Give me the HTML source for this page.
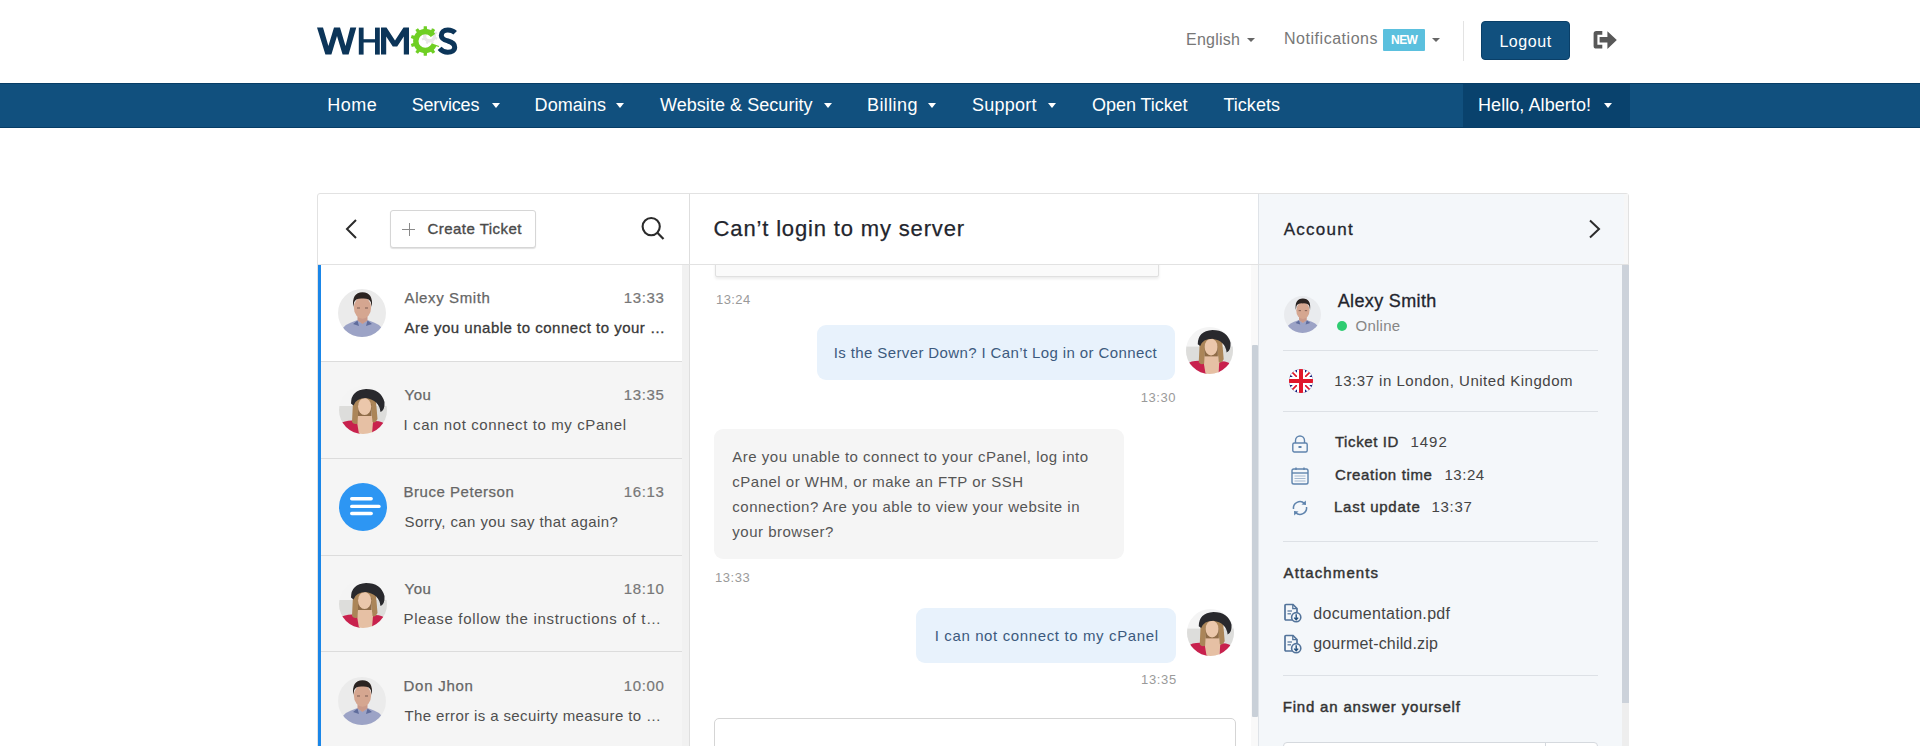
<!DOCTYPE html>
<html><head><meta charset="utf-8"><title>WHMCS Tickets</title>
<style>
html,body{margin:0;padding:0;background:#fff;width:1920px;height:746px;overflow:hidden;position:relative}
body{font-family:"Liberation Sans",sans-serif;white-space:nowrap}
</style></head><body>
<svg style="position:absolute;left:310px;top:18px" width="160" height="46" viewBox="310 18 160 46">
<defs><clipPath id="gw"><polygon points="425.3,41.0 453.5,51.3 451.3,56.0 448.3,60.3 444.6,64.0 440.3,67.0 435.6,69.2 430.5,70.5 425.3,71.0 420.1,70.5 415.0,69.2 410.3,67.0 406.0,64.0 402.3,60.3 399.3,56.0 397.1,51.3 395.8,46.2 395.3,41.0 395.8,35.8 397.1,30.7 399.3,26.0 402.3,21.7 406.0,18.0 410.3,15.0 415.0,12.8 420.1,11.5 425.3,11.0 430.5,11.5 435.6,12.8 440.3,15.0 444.6,18.0 448.3,21.7 449.6,23.4"/></clipPath></defs>
<g fill="#0c3559">
<polygon points="317,27.6 323,27.6 328.4,46 334,27.6 340,27.6 345.5,46 350.3,27.6 356.3,27.6 348.6,54.6 342.6,54.6 337,36 331.4,54.6 325.4,54.6"/>
<rect x="358.8" y="27.6" width="4.8" height="27"/><rect x="375" y="27.6" width="4.8" height="27"/><rect x="363" y="39.2" width="12.5" height="3.3"/>
<polygon points="381,54.6 381,27.6 386.5,27.6 395,40.5 403.5,27.6 409,27.6 409,54.6 403.8,54.6 403.8,36.5 397.2,46.5 392.8,46.5 386.2,36.5 386.2,54.6"/>
</g>
<path d="M429.22,29.51 L430.61,29.60 L431.28,27.89 L433.34,28.64 L432.76,30.38 L433.89,31.21 L434.82,32.26 L436.49,31.53 L437.42,33.52 L435.78,34.33 L435.99,35.72 L435.90,37.11 L437.61,37.78 L436.86,39.84 L435.12,39.26 L434.29,40.39 L433.24,41.32 L433.97,42.99 L431.98,43.92 L431.17,42.28 L429.78,42.49 L428.39,42.40 L427.72,44.11 L425.66,43.36 L426.24,41.62 L425.11,40.79 L424.18,39.74 L422.51,40.47 L421.58,38.48 L423.22,37.67 L423.01,36.28 L423.10,34.89 L421.39,34.22 L422.14,32.16 L423.88,32.74 L424.71,31.61 L425.76,30.68 L425.03,29.01 L427.02,28.08 L427.83,29.72 Z M432.70,36.00 A3.2,3.2 0 1 0 426.30,36.00 A3.2,3.2 0 1 0 432.70,36.00 Z" fill="#e8e8e8" fill-rule="evenodd"/>
<path d="M421.53,29.40 L423.58,28.92 L423.73,26.28 L426.87,26.28 L427.02,28.92 L429.07,29.40 L431.01,30.22 L432.68,28.17 L435.22,30.01 L433.79,32.24 L435.17,33.83 L436.26,35.63 L438.81,34.96 L439.78,37.94 L437.32,38.90 L437.50,41.00 L437.32,43.10 L439.78,44.06 L438.81,47.04 L436.26,46.37 L435.17,48.17 L433.79,49.76 L435.22,51.99 L432.68,53.83 L431.01,51.78 L429.07,52.60 L427.02,53.08 L426.87,55.72 L423.73,55.72 L423.58,53.08 L421.53,52.60 L419.59,51.78 L417.92,53.83 L415.38,51.99 L416.81,49.76 L415.43,48.17 L414.34,46.37 L411.79,47.04 L410.82,44.06 L413.28,43.10 L413.10,41.00 L413.28,38.90 L410.82,37.94 L411.79,34.96 L414.34,35.63 L415.43,33.83 L416.81,32.24 L415.38,30.01 L417.92,28.17 L419.59,30.22 Z M432.10,41.00 A6.8,6.8 0 1 0 418.50,41.00 A6.8,6.8 0 1 0 432.10,41.00 Z" fill="#6fcf24" fill-rule="evenodd" clip-path="url(#gw)"/>
<path d="M455.2,32.8 C452.8,30.4 450.3,29.9 447.8,29.9 C443.6,29.9 441.3,32.3 441.3,35.4 C441.3,39.1 444.9,40.1 448,41.0 C451.9,42.1 454.7,43.6 454.7,47.2 C454.7,50.4 451.8,52.2 447.8,52.2 C444.6,52.2 441.8,51.0 439.6,48.3" fill="none" stroke="#0c3559" stroke-width="5"/>
</svg>
<div style="position:absolute;left:1247px;top:38px;width:0;height:0;border-left:4.5px solid transparent;border-right:4.5px solid transparent;border-top:4.5px solid #666"></div>
<div style="position:absolute;left:1383px;top:29px;width:42px;height:22px;background:#5bc0de;border-radius:1px"></div>
<div style="position:absolute;left:1432px;top:38px;width:0;height:0;border-left:4.5px solid transparent;border-right:4.5px solid transparent;border-top:4.5px solid #666"></div>
<div style="position:absolute;left:1463px;top:21px;width:1px;height:40px;background:#e3e3e3"></div>
<div style="position:absolute;left:1481px;top:21px;width:87px;height:37px;background:#11507e;border:1px solid #0a3f68;border-radius:4px"></div>
<svg style="position:absolute;left:1588px;top:24px" width="34" height="32" viewBox="1588 24 34 32">
<path d="M1602.3,32.8 H1596.3 Q1595.5,32.8 1595.5,33.6 V45.9 Q1595.5,46.6 1596.3,46.6 H1602.3" fill="none" stroke="#585858" stroke-width="3.8"/>
<path d="M1599.6,36.9 H1607.4 V31.3 L1616.8,40 L1607.4,48.9 V42.6 H1599.6 Z" fill="#585858"/>
</svg>
<div style="position:absolute;left:0;top:83px;width:1920px;height:45px;background:#11507e;border-top:1px solid #073d66;border-bottom:1px solid #073d66;box-sizing:border-box"></div>
<div style="position:absolute;left:1463px;top:84px;width:167px;height:43px;background:#09426d"></div>
<div style="position:absolute;left:491.9px;top:103px;width:0;height:0;border-left:4.5px solid transparent;border-right:4.5px solid transparent;border-top:5px solid #fff"></div>
<div style="position:absolute;left:616.4px;top:103px;width:0;height:0;border-left:4.5px solid transparent;border-right:4.5px solid transparent;border-top:5px solid #fff"></div>
<div style="position:absolute;left:824px;top:103px;width:0;height:0;border-left:4.5px solid transparent;border-right:4.5px solid transparent;border-top:5px solid #fff"></div>
<div style="position:absolute;left:928px;top:103px;width:0;height:0;border-left:4.5px solid transparent;border-right:4.5px solid transparent;border-top:5px solid #fff"></div>
<div style="position:absolute;left:1048.4px;top:103px;width:0;height:0;border-left:4.5px solid transparent;border-right:4.5px solid transparent;border-top:5px solid #fff"></div>
<div style="position:absolute;left:1604px;top:103px;width:0;height:0;border-left:4.5px solid transparent;border-right:4.5px solid transparent;border-top:5px solid #fff"></div>
<div style="position:absolute;left:317px;top:193px;width:1312px;height:600px;border:1px solid #e2e2e2;border-radius:3px;box-sizing:border-box;background:#fff"></div>
<div style="position:absolute;left:1259px;top:194px;width:369px;height:560px;background:#f4f7fa;border-top-right-radius:2px"></div>
<div style="position:absolute;left:689px;top:194px;width:1px;height:560px;background:#dedede"></div>
<div style="position:absolute;left:1258px;top:194px;width:1px;height:560px;background:#dfe3e8"></div>
<div style="position:absolute;left:318px;top:264px;width:1310px;height:1px;background:#e2e2e2"></div>
<svg style="position:absolute;left:340px;top:214px" width="24" height="30" viewBox="0 0 24 30"><polyline points="16,6 7,15 16,24" fill="none" stroke="#2b2b2b" stroke-width="2"/></svg>
<div style="position:absolute;left:390px;top:210px;width:146px;height:38px;border:1px solid #d6d6d6;border-radius:3px;box-sizing:border-box;box-shadow:0 1px 1px rgba(0,0,0,0.12);background:#fff"></div>
<div style="position:absolute;left:402px;top:228.5px;width:13px;height:1px;background:#8a8a8a"></div><div style="position:absolute;left:408.5px;top:222.5px;width:1px;height:13px;background:#8a8a8a"></div>
<svg style="position:absolute;left:636px;top:212px" width="32" height="32" viewBox="636 212 32 32"><circle cx="651.2" cy="226.6" r="8.6" fill="none" stroke="#2b2b2b" stroke-width="2.1"/><line x1="657.4" y1="232.8" x2="663.5" y2="239" stroke="#2b2b2b" stroke-width="2.2"/></svg>
<div style="position:absolute;left:318px;top:265px;width:371px;height:490px;background:#f5f5f5"></div>
<div style="position:absolute;left:682px;top:265px;width:7px;height:490px;background:#f1f1f1"></div>
<div style="position:absolute;left:318px;top:265px;width:364px;height:97px;background:#fff"></div>
<div style="position:absolute;left:318px;top:265px;width:3px;height:490px;background:#1a86e8"></div>
<div style="position:absolute;left:321px;top:361px;width:361px;height:1px;background:#dcdcdc"></div>
<div style="position:absolute;left:321px;top:458px;width:361px;height:1px;background:#dcdcdc"></div>
<div style="position:absolute;left:321px;top:555px;width:361px;height:1px;background:#dcdcdc"></div>
<div style="position:absolute;left:321px;top:651px;width:361px;height:1px;background:#dcdcdc"></div>
<svg style="position:absolute;left:338.0px;top:289.0px;filter:blur(0.45px)" width="48" height="48" viewBox="0 0 48 48">
<defs><clipPath id="c362_313"><circle cx="24" cy="24" r="24"/></clipPath></defs>
<g clip-path="url(#c362_313)"><rect width="48" height="48" fill="#ebebeb"/>
<path d="M1,48 Q3,37 13,33.5 L19.5,31 L24.5,34.5 L29.5,31 L36,33.5 Q46,37 47,48 Z" fill="#9ca3c6"/>
<path d="M15,35 L19.5,31.5 L21,37 Z M34,35 L29.5,31.5 L28,37 Z" fill="#5f6c9c"/>
<path d="M19.5,25 h10 v6.5 l-5,3.5 l-5,-3.5 z" fill="#c9998a"/>
<ellipse cx="24.5" cy="18.8" rx="8.6" ry="11" fill="#d5a690"/>
<path d="M15.2,18 Q13.5,3.5 24.5,3.2 Q35.5,3.5 33.8,18 L32.8,13 Q31,9.2 24.5,9.6 Q18,9.2 16.2,13 Z" fill="#2b2321"/>
<path d="M19,19 h3 M27,19 h3" stroke="#7a5a50" stroke-width="1.2"/>
</g></svg>
<svg style="position:absolute;left:338.5px;top:386.0px;filter:blur(0.5px)" width="48" height="48" viewBox="0 0 48 48">
<defs><clipPath id="w362_5_410"><circle cx="24" cy="24" r="24"/></clipPath></defs>
<g clip-path="url(#w362_5_410)"><rect width="48" height="48" fill="#f4f4f4"/>
<rect y="20" width="48" height="18" fill="#dddddb"/>
<path d="M0,48 V38 Q6,34 15,34.5 L21,37 L21,48 Z M48,48 V40 Q44,35 36,35 L33,37 V48 Z" fill="#c8214d"/>
<path d="M19,27 L32,27 L34,36 L33,48 L20,48 L18,36 Z" fill="#e6c0a4"/>
<path d="M14,15 Q16,8 25.5,8 Q35,8 37,15 L38.5,33 Q36.5,37.5 33.5,36 L32,22 L19.5,22 L18.5,37.5 Q15,39 13,36 Z" fill="#ab8558"/>
<rect x="19" y="18" width="13.5" height="12" fill="#8f6c48"/><ellipse cx="25.6" cy="20.5" rx="6.6" ry="8.6" fill="#ebc7ab"/>
<path d="M12,17.5 Q12,4 27,3 Q42,3 45.5,16 Q46,24 41.5,26 Q40,14 27,12 Q17,12 14.5,19.5 Z" fill="#29292d"/>
</g></svg>
<svg style="position:absolute;left:338.5px;top:483.0px" width="48" height="48" viewBox="0 0 48 48">
<circle cx="24" cy="24" r="24" fill="#2d96f3"/>
<g stroke="#fff" stroke-width="3.4" stroke-linecap="round"><line x1="12.7" y1="15.8" x2="32.2" y2="15.8"/><line x1="12.7" y1="23.4" x2="40" y2="23.4"/><line x1="12.7" y1="30.5" x2="32.2" y2="30.5"/></g></svg>
<svg style="position:absolute;left:338.5px;top:580.0px;filter:blur(0.5px)" width="48" height="48" viewBox="0 0 48 48">
<defs><clipPath id="w362_5_604"><circle cx="24" cy="24" r="24"/></clipPath></defs>
<g clip-path="url(#w362_5_604)"><rect width="48" height="48" fill="#f4f4f4"/>
<rect y="20" width="48" height="18" fill="#dddddb"/>
<path d="M0,48 V38 Q6,34 15,34.5 L21,37 L21,48 Z M48,48 V40 Q44,35 36,35 L33,37 V48 Z" fill="#c8214d"/>
<path d="M19,27 L32,27 L34,36 L33,48 L20,48 L18,36 Z" fill="#e6c0a4"/>
<path d="M14,15 Q16,8 25.5,8 Q35,8 37,15 L38.5,33 Q36.5,37.5 33.5,36 L32,22 L19.5,22 L18.5,37.5 Q15,39 13,36 Z" fill="#ab8558"/>
<rect x="19" y="18" width="13.5" height="12" fill="#8f6c48"/><ellipse cx="25.6" cy="20.5" rx="6.6" ry="8.6" fill="#ebc7ab"/>
<path d="M12,17.5 Q12,4 27,3 Q42,3 45.5,16 Q46,24 41.5,26 Q40,14 27,12 Q17,12 14.5,19.5 Z" fill="#29292d"/>
</g></svg>
<svg style="position:absolute;left:338.0px;top:677.0px;filter:blur(0.45px)" width="48" height="48" viewBox="0 0 48 48">
<defs><clipPath id="c362_701"><circle cx="24" cy="24" r="24"/></clipPath></defs>
<g clip-path="url(#c362_701)"><rect width="48" height="48" fill="#ebebeb"/>
<path d="M1,48 Q3,37 13,33.5 L19.5,31 L24.5,34.5 L29.5,31 L36,33.5 Q46,37 47,48 Z" fill="#9ca3c6"/>
<path d="M15,35 L19.5,31.5 L21,37 Z M34,35 L29.5,31.5 L28,37 Z" fill="#5f6c9c"/>
<path d="M19.5,25 h10 v6.5 l-5,3.5 l-5,-3.5 z" fill="#c9998a"/>
<ellipse cx="24.5" cy="18.8" rx="8.6" ry="11" fill="#d5a690"/>
<path d="M15.2,18 Q13.5,3.5 24.5,3.2 Q35.5,3.5 33.8,18 L32.8,13 Q31,9.2 24.5,9.6 Q18,9.2 16.2,13 Z" fill="#2b2321"/>
<path d="M19,19 h3 M27,19 h3" stroke="#7a5a50" stroke-width="1.2"/>
</g></svg>
<div style="position:absolute;left:715px;top:230px;width:444px;height:47px;border:1px solid #e0e0e0;border-radius:2px;box-sizing:border-box;background:#fafafa;box-shadow:0 2px 3px rgba(0,0,0,0.08);clip-path:inset(35px -5px -6px -5px)"></div>
<div style="position:absolute;left:817px;top:325px;width:358px;height:55px;background:#e8f2fc;border-radius:9px"></div>
<svg style="position:absolute;left:1186.0px;top:326.5px;filter:blur(0.5px)" width="47" height="47" viewBox="0 0 48 48">
<defs><clipPath id="w1209_5_350"><circle cx="24" cy="24" r="24"/></clipPath></defs>
<g clip-path="url(#w1209_5_350)"><rect width="48" height="48" fill="#f4f4f4"/>
<rect y="20" width="48" height="18" fill="#dddddb"/>
<path d="M0,48 V38 Q6,34 15,34.5 L21,37 L21,48 Z M48,48 V40 Q44,35 36,35 L33,37 V48 Z" fill="#c8214d"/>
<path d="M19,27 L32,27 L34,36 L33,48 L20,48 L18,36 Z" fill="#e6c0a4"/>
<path d="M14,15 Q16,8 25.5,8 Q35,8 37,15 L38.5,33 Q36.5,37.5 33.5,36 L32,22 L19.5,22 L18.5,37.5 Q15,39 13,36 Z" fill="#ab8558"/>
<rect x="19" y="18" width="13.5" height="12" fill="#8f6c48"/><ellipse cx="25.6" cy="20.5" rx="6.6" ry="8.6" fill="#ebc7ab"/>
<path d="M12,17.5 Q12,4 27,3 Q42,3 45.5,16 Q46,24 41.5,26 Q40,14 27,12 Q17,12 14.5,19.5 Z" fill="#29292d"/>
</g></svg>
<div style="position:absolute;left:714px;top:429px;width:410px;height:130px;background:#f5f5f5;border-radius:9px"></div>
<div style="position:absolute;left:916px;top:608px;width:260px;height:55px;background:#e8f2fc;border-radius:9px"></div>
<svg style="position:absolute;left:1186.5px;top:608.5px;filter:blur(0.5px)" width="47" height="47" viewBox="0 0 48 48">
<defs><clipPath id="w1210_632"><circle cx="24" cy="24" r="24"/></clipPath></defs>
<g clip-path="url(#w1210_632)"><rect width="48" height="48" fill="#f4f4f4"/>
<rect y="20" width="48" height="18" fill="#dddddb"/>
<path d="M0,48 V38 Q6,34 15,34.5 L21,37 L21,48 Z M48,48 V40 Q44,35 36,35 L33,37 V48 Z" fill="#c8214d"/>
<path d="M19,27 L32,27 L34,36 L33,48 L20,48 L18,36 Z" fill="#e6c0a4"/>
<path d="M14,15 Q16,8 25.5,8 Q35,8 37,15 L38.5,33 Q36.5,37.5 33.5,36 L32,22 L19.5,22 L18.5,37.5 Q15,39 13,36 Z" fill="#ab8558"/>
<rect x="19" y="18" width="13.5" height="12" fill="#8f6c48"/><ellipse cx="25.6" cy="20.5" rx="6.6" ry="8.6" fill="#ebc7ab"/>
<path d="M12,17.5 Q12,4 27,3 Q42,3 45.5,16 Q46,24 41.5,26 Q40,14 27,12 Q17,12 14.5,19.5 Z" fill="#29292d"/>
</g></svg>
<div style="position:absolute;left:714px;top:718px;width:522px;height:60px;border:1px solid #d5d5d5;border-radius:5px;box-sizing:border-box;background:#fff"></div>
<div style="position:absolute;left:1251px;top:265px;width:7px;height:490px;background:#f9f9f9"></div>
<div style="position:absolute;left:1252px;top:345px;width:6px;height:372px;background:#c9d0d8;border-radius:1px"></div>
<svg style="position:absolute;left:1580px;top:214px" width="24" height="30" viewBox="0 0 24 30"><polyline points="10,6.5 19,15 10,23.5" fill="none" stroke="#2b2b2b" stroke-width="2"/></svg>
<div style="position:absolute;left:1624px;top:194px;width:4px;height:70px;background:#f7f7f7"></div>
<div style="position:absolute;left:1622px;top:265px;width:7px;height:490px;background:#eeeeee"></div>
<div style="position:absolute;left:1622px;top:265px;width:7px;height:438px;background:#ccd2da"></div>
<svg style="position:absolute;left:1284.0px;top:295.5px;filter:blur(0.45px)" width="37" height="37" viewBox="0 0 48 48">
<defs><clipPath id="c1302_5_314"><circle cx="24" cy="24" r="24"/></clipPath></defs>
<g clip-path="url(#c1302_5_314)"><rect width="48" height="48" fill="#e9ebee"/>
<path d="M1,48 Q3,37 13,33.5 L19.5,31 L24.5,34.5 L29.5,31 L36,33.5 Q46,37 47,48 Z" fill="#9ca3c6"/>
<path d="M15,35 L19.5,31.5 L21,37 Z M34,35 L29.5,31.5 L28,37 Z" fill="#5f6c9c"/>
<path d="M19.5,25 h10 v6.5 l-5,3.5 l-5,-3.5 z" fill="#c9998a"/>
<ellipse cx="24.5" cy="18.8" rx="8.6" ry="11" fill="#d5a690"/>
<path d="M15.2,18 Q13.5,3.5 24.5,3.2 Q35.5,3.5 33.8,18 L32.8,13 Q31,9.2 24.5,9.6 Q18,9.2 16.2,13 Z" fill="#2b2321"/>
<path d="M19,19 h3 M27,19 h3" stroke="#7a5a50" stroke-width="1.2"/>
</g></svg>
<div style="position:absolute;left:1337px;top:321px;width:10px;height:10px;border-radius:50%;background:#2ecc71"></div>
<div style="position:absolute;left:1283px;top:350px;width:315px;height:1px;background:#dde1e6"></div>
<div style="position:absolute;left:1283px;top:411px;width:315px;height:1px;background:#dde1e6"></div>
<div style="position:absolute;left:1283px;top:541px;width:315px;height:1px;background:#dde1e6"></div>
<div style="position:absolute;left:1283px;top:675px;width:315px;height:1px;background:#dde1e6"></div>
<svg style="position:absolute;left:1288.5px;top:368.5px" width="24" height="24" viewBox="0 0 60 60">
<defs><clipPath id="uk"><circle cx="30" cy="30" r="30"/></clipPath></defs>
<g clip-path="url(#uk)"><rect width="60" height="60" fill="#1a237e"/>
<path d="M0,0 L60,60 M60,0 L0,60" stroke="#fff" stroke-width="15"/>
<path d="M0,0 L60,60 M60,0 L0,60" stroke="#e0182b" stroke-width="4"/>
<path d="M30,0 V60 M0,30 H60" stroke="#fff" stroke-width="20"/>
<path d="M30,0 V60 M0,30 H60" stroke="#e0182b" stroke-width="10"/></g></svg>
<svg style="position:absolute;left:1290px;top:434px" width="20" height="20" viewBox="0 0 20 20"><path d="M5.5,9 V6.5 a4.5,4.5 0 0 1 9,0 V9" fill="none" stroke="#5f84ad" stroke-width="1.4"/><rect x="2.8" y="9" width="14.4" height="9" rx="1.5" fill="none" stroke="#5f84ad" stroke-width="1.4"/><rect x="8.5" y="12" width="3" height="2" fill="#5f84ad"/></svg>
<svg style="position:absolute;left:1290px;top:466px" width="20" height="20" viewBox="0 0 20 20"><rect x="2" y="3" width="16" height="15" rx="1.8" fill="none" stroke="#5f84ad" stroke-width="1.4"/><line x1="2" y1="7" x2="18" y2="7" stroke="#5f84ad" stroke-width="1.4"/><g stroke="#a5b9d0" stroke-width="1"><line x1="4.5" y1="10" x2="15.5" y2="10"/><line x1="4.5" y1="12.5" x2="15.5" y2="12.5"/><line x1="4.5" y1="15" x2="15.5" y2="15"/></g><line x1="6" y1="1.5" x2="6" y2="4" stroke="#5f84ad" stroke-width="1.4"/><line x1="14" y1="1.5" x2="14" y2="4" stroke="#5f84ad" stroke-width="1.4"/></svg>
<svg style="position:absolute;left:1290px;top:498px" width="20" height="20" viewBox="0 0 20 20"><path d="M3.5,11 a6.5,6.5 0 0 1 11,-5.5" fill="none" stroke="#5f84ad" stroke-width="1.5"/><path d="M16.5,9 a6.5,6.5 0 0 1 -11,5.5" fill="none" stroke="#5f84ad" stroke-width="1.5"/><path d="M15.8,2.5 L16,7 L11.5,6.6 Z" fill="#5f84ad"/><path d="M4.2,17.5 L4,13 L8.5,13.4 Z" fill="#5f84ad"/></svg>
<svg style="position:absolute;left:1283px;top:603px" width="20" height="20" viewBox="0 0 20 20"><path d="M9.5,17 H3 Q2,17 2,16 V2.5 Q2,1.5 3,1.5 H10 L14,5.5 V9" fill="none" stroke="#52739a" stroke-width="1.7"/><path d="M9.8,1.5 V5.6 H14" fill="none" stroke="#52739a" stroke-width="1.3"/><line x1="4.5" y1="8" x2="9" y2="8" stroke="#52739a" stroke-width="1.2"/><line x1="4.5" y1="10.8" x2="8" y2="10.8" stroke="#52739a" stroke-width="1.2"/><circle cx="13.2" cy="14.2" r="4.6" fill="#f4f7fa" stroke="#52739a" stroke-width="1.6"/><path d="M13.2,11.3 V16.6 M11.2,14.6 L13.2,16.8 L15.2,14.6" fill="none" stroke="#24507e" stroke-width="1.4"/></svg>
<svg style="position:absolute;left:1283px;top:634px" width="20" height="20" viewBox="0 0 20 20"><path d="M9.5,17 H3 Q2,17 2,16 V2.5 Q2,1.5 3,1.5 H10 L14,5.5 V9" fill="none" stroke="#52739a" stroke-width="1.7"/><path d="M9.8,1.5 V5.6 H14" fill="none" stroke="#52739a" stroke-width="1.3"/><line x1="4.5" y1="8" x2="9" y2="8" stroke="#52739a" stroke-width="1.2"/><line x1="4.5" y1="10.8" x2="8" y2="10.8" stroke="#52739a" stroke-width="1.2"/><circle cx="13.2" cy="14.2" r="4.6" fill="#f4f7fa" stroke="#52739a" stroke-width="1.6"/><path d="M13.2,11.3 V16.6 M11.2,14.6 L13.2,16.8 L15.2,14.6" fill="none" stroke="#24507e" stroke-width="1.4"/></svg>
<div style="position:absolute;left:1283px;top:742px;width:315px;height:40px;border:1px solid #d5d9de;border-radius:4px;box-sizing:border-box;background:#fff"></div>
<div style="position:absolute;left:1545px;top:743px;width:1px;height:40px;background:#d5d9de"></div>
<div style="position:absolute;left:1186.00px;top:31.50px;font-size:16px;line-height:16px;color:#777;letter-spacing:0.237px;">English</div>
<div style="position:absolute;left:1284.00px;top:31.00px;font-size:16px;line-height:16px;color:#777;letter-spacing:0.529px;">Notifications</div>
<div style="position:absolute;left:1391.00px;top:33.90px;font-size:12px;line-height:12px;color:#fff;letter-spacing:-0.535px;font-weight:700;">NEW</div>
<div style="position:absolute;left:1499.40px;top:33.70px;font-size:16px;line-height:16px;color:#fff;letter-spacing:0.562px;">Logout</div>
<div style="position:absolute;left:327.30px;top:95.80px;font-size:18px;line-height:18px;color:#fff;letter-spacing:0.499px;">Home</div>
<div style="position:absolute;left:411.70px;top:95.80px;font-size:18px;line-height:18px;color:#fff;letter-spacing:-0.189px;">Services</div>
<div style="position:absolute;left:534.60px;top:95.80px;font-size:18px;line-height:18px;color:#fff;letter-spacing:0.063px;">Domains</div>
<div style="position:absolute;left:660.00px;top:95.80px;font-size:18px;line-height:18px;color:#fff;letter-spacing:0.046px;">Website &amp; Security</div>
<div style="position:absolute;left:867.00px;top:95.80px;font-size:18px;line-height:18px;color:#fff;letter-spacing:0.398px;">Billing</div>
<div style="position:absolute;left:971.90px;top:95.80px;font-size:18px;line-height:18px;color:#fff;letter-spacing:0.276px;">Support</div>
<div style="position:absolute;left:1092.00px;top:95.80px;font-size:18px;line-height:18px;color:#fff;letter-spacing:-0.047px;">Open Ticket</div>
<div style="position:absolute;left:1223.40px;top:95.80px;font-size:18px;line-height:18px;color:#fff;letter-spacing:0.044px;">Tickets</div>
<div style="position:absolute;left:1478.00px;top:95.80px;font-size:18px;line-height:18px;color:#fff;letter-spacing:0.068px;">Hello, Alberto!</div>
<div style="position:absolute;left:427.40px;top:221.00px;font-size:15px;line-height:15px;color:#4a4a4a;letter-spacing:0.477px;-webkit-text-stroke:0.35px #4a4a4a;">Create Ticket</div>
<div style="position:absolute;left:404.50px;top:290.20px;font-size:15px;line-height:15px;color:#666;letter-spacing:0.625px;-webkit-text-stroke:0.25px #666;">Alexy Smith</div>
<div style="position:absolute;left:623.70px;top:290.20px;font-size:15px;line-height:15px;color:#777;letter-spacing:0.651px;-webkit-text-stroke:0.2px #777;">13:33</div>
<div style="position:absolute;left:404.50px;top:319.70px;font-size:15px;line-height:15px;color:#383838;letter-spacing:0.501px;-webkit-text-stroke:0.3px #383838;">Are you unable to connect to your …</div>
<div style="position:absolute;left:404.50px;top:387.20px;font-size:15px;line-height:15px;color:#666;letter-spacing:0.565px;-webkit-text-stroke:0.25px #666;">You</div>
<div style="position:absolute;left:623.70px;top:387.20px;font-size:15px;line-height:15px;color:#777;letter-spacing:0.651px;-webkit-text-stroke:0.2px #777;">13:35</div>
<div style="position:absolute;left:403.50px;top:416.70px;font-size:15px;line-height:15px;color:#4f4f4f;letter-spacing:0.601px;">I can not connect to my cPanel</div>
<div style="position:absolute;left:403.50px;top:484.20px;font-size:15px;line-height:15px;color:#666;letter-spacing:0.535px;-webkit-text-stroke:0.25px #666;">Bruce Peterson</div>
<div style="position:absolute;left:623.70px;top:484.20px;font-size:15px;line-height:15px;color:#777;letter-spacing:0.651px;-webkit-text-stroke:0.2px #777;">16:13</div>
<div style="position:absolute;left:404.50px;top:513.70px;font-size:15px;line-height:15px;color:#4f4f4f;letter-spacing:0.408px;">Sorry, can you say that again?</div>
<div style="position:absolute;left:404.50px;top:581.20px;font-size:15px;line-height:15px;color:#666;letter-spacing:0.565px;-webkit-text-stroke:0.25px #666;">You</div>
<div style="position:absolute;left:623.70px;top:581.20px;font-size:15px;line-height:15px;color:#777;letter-spacing:0.651px;-webkit-text-stroke:0.2px #777;">18:10</div>
<div style="position:absolute;left:403.50px;top:610.70px;font-size:15px;line-height:15px;color:#4f4f4f;letter-spacing:0.687px;">Please follow the instructions of t…</div>
<div style="position:absolute;left:403.50px;top:678.20px;font-size:15px;line-height:15px;color:#666;letter-spacing:0.747px;-webkit-text-stroke:0.25px #666;">Don Jhon</div>
<div style="position:absolute;left:623.70px;top:678.20px;font-size:15px;line-height:15px;color:#777;letter-spacing:0.651px;-webkit-text-stroke:0.2px #777;">10:00</div>
<div style="position:absolute;left:404.50px;top:707.70px;font-size:15px;line-height:15px;color:#4f4f4f;letter-spacing:0.374px;">The error is a secuirty measure to …</div>
<div style="position:absolute;left:713.60px;top:218.30px;font-size:22px;line-height:22px;color:#23252d;letter-spacing:0.845px;-webkit-text-stroke:0.25px #23252d;">Can’t login to my server</div>
<div style="position:absolute;left:716.00px;top:292.75px;font-size:13px;line-height:13px;color:#9a9a9a;letter-spacing:0.425px;">13:24</div>
<div style="position:absolute;left:833.75px;top:345.20px;font-size:15px;line-height:15px;color:#3c5a7e;letter-spacing:0.385px;">Is the Server Down? I Can’t Log in or Connect</div>
<div style="position:absolute;left:1140.70px;top:391.00px;font-size:13px;line-height:13px;color:#9a9a9a;letter-spacing:0.575px;">13:30</div>
<div style="position:absolute;left:732.30px;top:449.00px;font-size:15px;line-height:15px;color:#555;letter-spacing:0.504px;">Are you unable to connect to your cPanel, log into</div>
<div style="position:absolute;left:732.30px;top:474.10px;font-size:15px;line-height:15px;color:#555;letter-spacing:0.504px;">cPanel or WHM, or make an FTP or SSH</div>
<div style="position:absolute;left:732.30px;top:499.20px;font-size:15px;line-height:15px;color:#555;letter-spacing:0.504px;">connection? Are you able to view your website in</div>
<div style="position:absolute;left:732.30px;top:524.30px;font-size:15px;line-height:15px;color:#555;letter-spacing:0.504px;">your browser?</div>
<div style="position:absolute;left:715.00px;top:570.70px;font-size:13px;line-height:13px;color:#9a9a9a;letter-spacing:0.525px;">13:33</div>
<div style="position:absolute;left:934.70px;top:627.50px;font-size:15px;line-height:15px;color:#3c5a7e;letter-spacing:0.628px;">I can not connect to my cPanel</div>
<div style="position:absolute;left:1141.00px;top:673.40px;font-size:13px;line-height:13px;color:#9a9a9a;letter-spacing:0.675px;">13:35</div>
<div style="position:absolute;left:1283.70px;top:221.00px;font-size:17px;line-height:17px;color:#23252d;letter-spacing:1.266px;-webkit-text-stroke:0.3px #23252d;">Account</div>
<div style="position:absolute;left:1337.70px;top:292.40px;font-size:18px;line-height:18px;color:#23252d;letter-spacing:0.358px;-webkit-text-stroke:0.3px #23252d;">Alexy Smith</div>
<div style="position:absolute;left:1355.50px;top:317.80px;font-size:15px;line-height:15px;color:#868686;letter-spacing:0.257px;">Online</div>
<div style="position:absolute;left:1334.30px;top:372.60px;font-size:15px;line-height:15px;color:#444;letter-spacing:0.518px;">13:37 in London, United Kingdom</div>
<div style="position:absolute;left:1334.90px;top:434.40px;font-size:15px;line-height:15px;color:#333;letter-spacing:0.602px;-webkit-text-stroke:0.4px #333;">Ticket ID</div>
<div style="position:absolute;left:1410.50px;top:434.40px;font-size:15px;line-height:15px;color:#444;letter-spacing:0.958px;">1492</div>
<div style="position:absolute;left:1335.00px;top:466.80px;font-size:15px;line-height:15px;color:#333;letter-spacing:0.645px;-webkit-text-stroke:0.4px #333;">Creation time</div>
<div style="position:absolute;left:1444.50px;top:466.80px;font-size:15px;line-height:15px;color:#444;letter-spacing:0.526px;">13:24</div>
<div style="position:absolute;left:1334.00px;top:498.50px;font-size:15px;line-height:15px;color:#333;letter-spacing:0.734px;-webkit-text-stroke:0.4px #333;">Last update</div>
<div style="position:absolute;left:1431.40px;top:498.50px;font-size:15px;line-height:15px;color:#444;letter-spacing:0.751px;">13:37</div>
<div style="position:absolute;left:1283.60px;top:564.90px;font-size:15px;line-height:15px;color:#333;letter-spacing:1.113px;-webkit-text-stroke:0.45px #333;">Attachments</div>
<div style="position:absolute;left:1313.20px;top:605.50px;font-size:16px;line-height:16px;color:#444;letter-spacing:0.325px;">documentation.pdf</div>
<div style="position:absolute;left:1313.20px;top:635.70px;font-size:16px;line-height:16px;color:#444;letter-spacing:0.179px;">gourmet-child.zip</div>
<div style="position:absolute;left:1282.70px;top:698.70px;font-size:15px;line-height:15px;color:#333;letter-spacing:0.817px;-webkit-text-stroke:0.45px #333;">Find an answer yourself</div>
</body></html>
